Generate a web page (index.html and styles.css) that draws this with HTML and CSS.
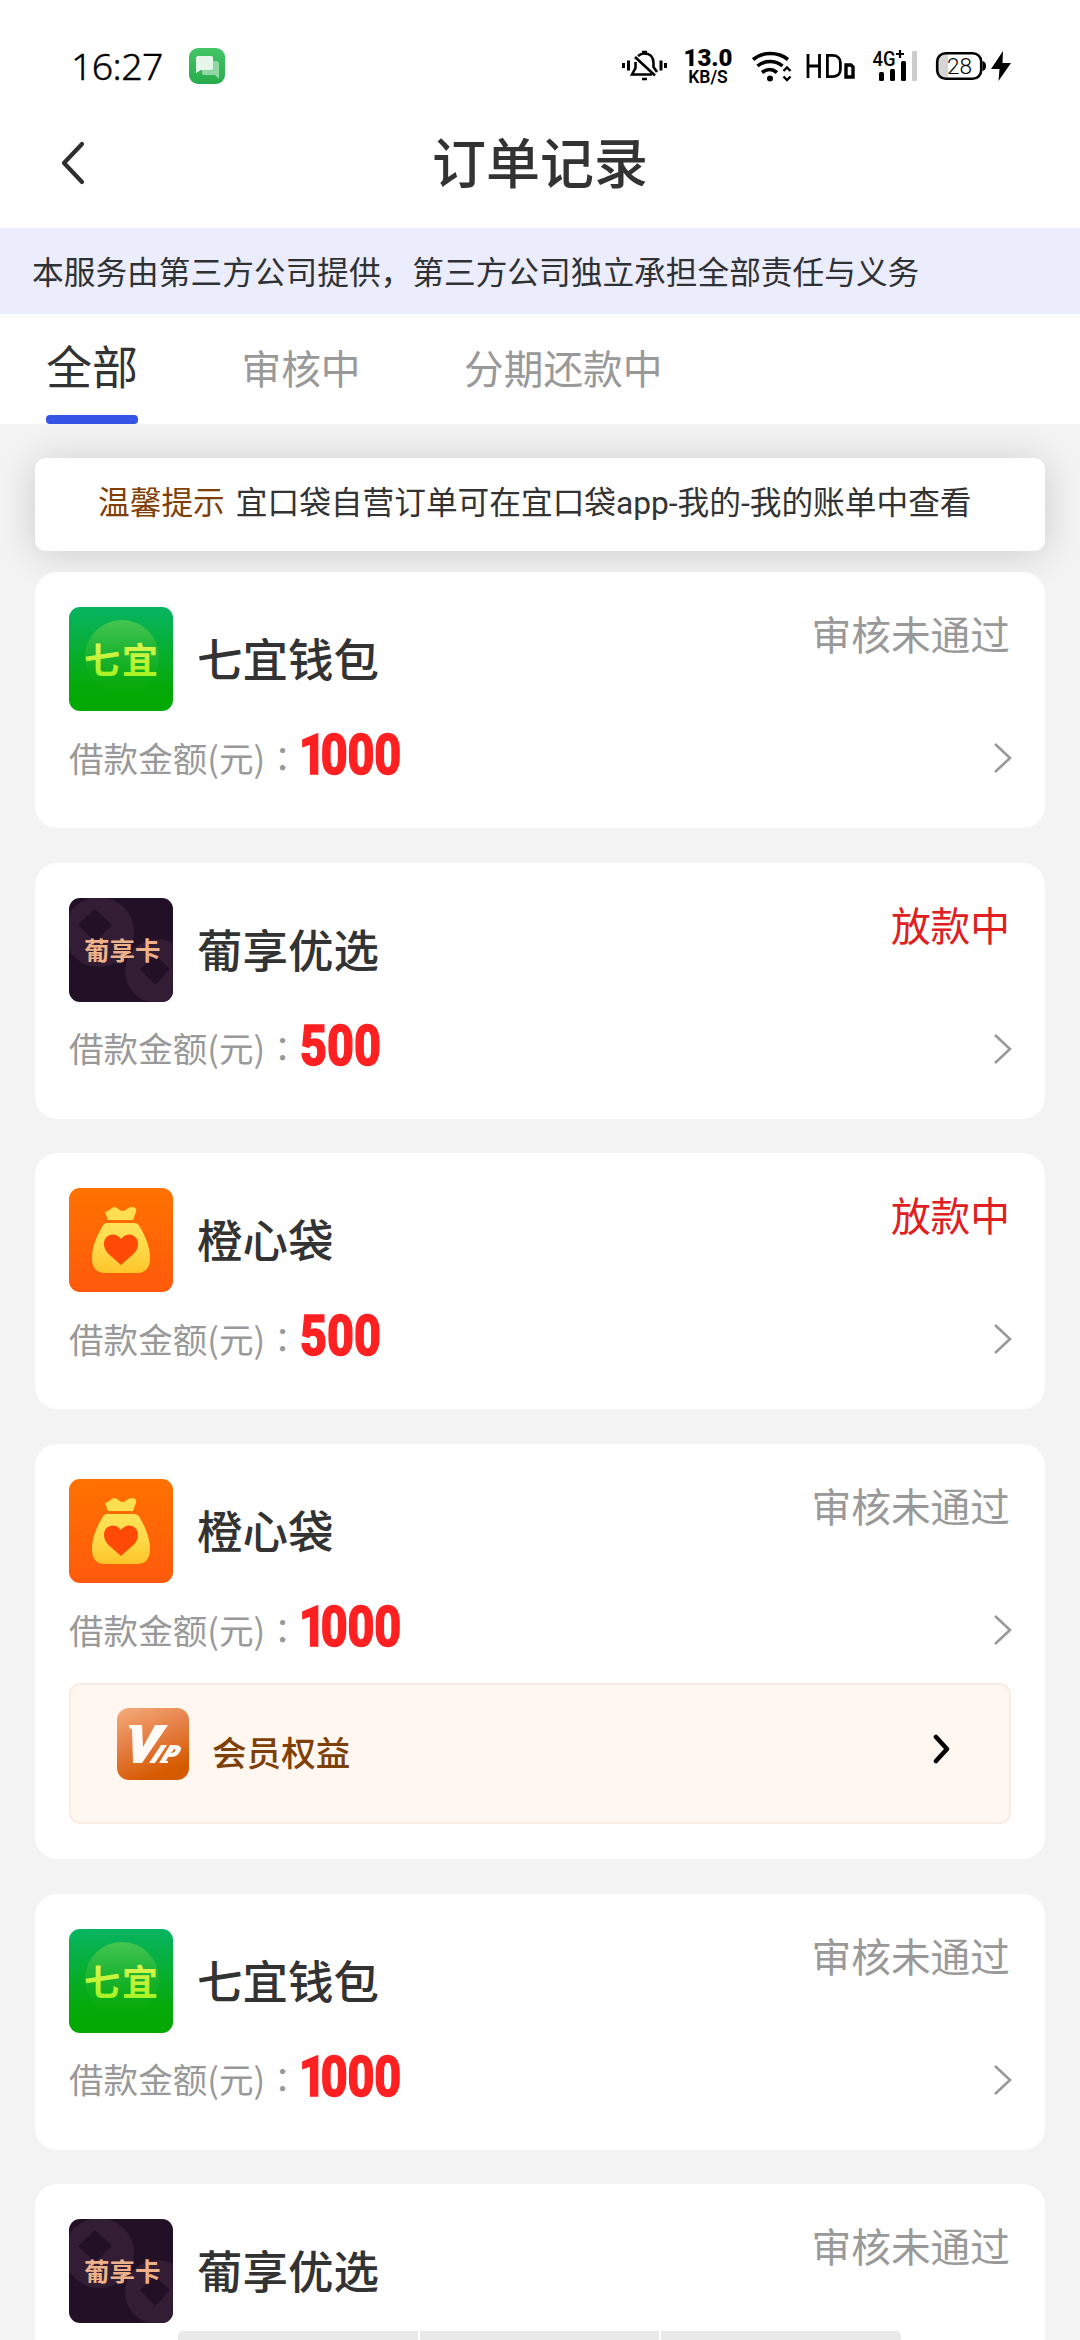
FILE: index.html
```html
<!DOCTYPE html>
<html lang="zh-CN">
<head>
<meta charset="utf-8">
<title>订单记录</title>
<link rel="stylesheet" href="styles.css">
</head>
<body>
<svg class="sprite" width="0" height="0">
  <defs>
    <linearGradient id="gGreen" x1="0" y1="0" x2="0" y2="1"><stop offset="0" stop-color="#08b462"/><stop offset=".75" stop-color="#05aa0a"/><stop offset="1" stop-color="#03a800"/></linearGradient>
    <linearGradient id="gDisc" x1="0" y1="0" x2="0" y2="1"><stop offset="0" stop-color="#4cc850" stop-opacity=".9"/><stop offset=".6" stop-color="#2cb52c" stop-opacity=".4"/><stop offset="1" stop-color="#10ac10" stop-opacity="0"/></linearGradient>
    <linearGradient id="gLime" x1="0" y1="0" x2="0" y2="1"><stop offset="0" stop-color="#f0f45c"/><stop offset="1" stop-color="#9af21a"/></linearGradient>
    <linearGradient id="gOrange" x1="0" y1="0" x2="0" y2="1"><stop offset="0" stop-color="#ff7200"/><stop offset="1" stop-color="#ff5a0c"/></linearGradient>
    <linearGradient id="gBag" x1="0" y1="0" x2="0" y2="1"><stop offset="0" stop-color="#ffe258"/><stop offset=".5" stop-color="#ffda48"/><stop offset="1" stop-color="#ffc42a"/></linearGradient>
    <linearGradient id="gVip" x1="0" y1="0" x2=".4" y2="1"><stop offset="0" stop-color="#f6ab7c"/><stop offset=".5" stop-color="#e57f45"/><stop offset="1" stop-color="#d65a00"/></linearGradient>
    <linearGradient id="gMsg" x1="0" y1="0" x2="0" y2="1"><stop offset="0" stop-color="#45c566"/><stop offset="1" stop-color="#27ac4b"/></linearGradient>
    <clipPath id="tile"><rect width="104" height="104" rx="11"/></clipPath>
  </defs>
  <symbol id="logo-qiyi" viewBox="0 0 104 104">
    <rect width="104" height="104" rx="11" fill="url(#gGreen)"/>
    <circle cx="53" cy="50" r="37" fill="url(#gDisc)"/>
  </symbol>
  <symbol id="logo-puxiang" viewBox="0 0 104 104">
    <g clip-path="url(#tile)">
      <rect width="104" height="104" fill="#221027"/>
      <circle cx="30" cy="34" r="35" fill="#331d35"/>
      <path d="M26 11l17 16-17 17L9 27z" fill="#221027"/>
      <circle cx="88" cy="73" r="32" fill="#331d35"/>
      <path d="M86 57l15 14-15 16-15-16z" fill="#221027"/>
    </g>
  </symbol>
  <symbol id="logo-bag" viewBox="0 0 104 104">
    <rect width="104" height="104" rx="11" fill="url(#gOrange)"/>
    <path d="M39 32l-3-8c4-1 6-4 9-5 4 0 5 4 9 4 4-1 5-4 9-4 4 0 5 3 4 5l-3 8z" fill="#ffdf50"/>
    <path d="M38 35h27c3 0 5 2 6 4 5 9 10 19 10 31 0 9-4 15-13 15H36c-9 0-13-6-13-15 0-12 5-22 10-31 1-2 3-4 5-4z" fill="url(#gBag)"/>
    <path d="M52 77C43 68 35 65 35 56c0-6 4-9.500 9-9.500 4 0 7 3 8 4.500 1-1.500 4-4.500 8-4.500 5 0 9 3.500 9 9.500 0 9-8 12-17 21z" fill="#ff4a05"/>
  </symbol>
  <symbol id="chev" viewBox="0 0 20 32"><path d="M2 2l15 14L2 30" fill="none" stroke="currentColor"/></symbol>
</svg>

<div class="screen">
  <header class="status-bar">
    <span class="clock">16:27</span>
    <svg class="msg" viewBox="0 0 36 36"><rect width="36" height="36" rx="9" fill="url(#gMsg)"/><path d="M13 13h14c2 0 3 1 3 2v16l-4-4H15c-1 0-2-1-2-2z" fill="#90d7a3"/><path d="M9 8h13c2 0 2 1 2 2v10c0 1-1 2-2 2H12l-5 3V10c0-1 1-2 2-2z" fill="#e6f6ea"/></svg>
    <svg class="bell" viewBox="621 48 48 36" fill="none" stroke="#000" stroke-width="2.600">
      <path d="M623.500 63v5M628.500 60.500v10M661 60.500v10M665.500 63v5" stroke-width="3"/>
      <path d="M638 56c2-1.700 4-2.500 6.300-2.500 6 0 9.200 3.800 9.200 9.500v4l3.500 5M635.500 62v6l-3.500 6.500h20M635 57l20 18.500"/>
      <path d="M642 52h5M642 79h5"/>
    </svg>
    <span class="speed"><b>13.0</b><i>KB/S</i></span>
    <svg class="wifi" viewBox="751 48 42 36" fill="none" stroke="#000" stroke-width="3.600">
      <path d="M753 59.500c10-8 25-8 35 0M757.500 66c7-6 18-6 25 0M762 72.500c5-4 10-4 15 0"/><circle cx="770" cy="78.500" r="3" fill="#000" stroke="none"/>
      <path d="M783.500 71l3.500-3.500 3.500 3.500M783.500 76.500l3.500 3.500 3.500-3.500" stroke-width="2.400"/>
    </svg>
    <svg class="hd" viewBox="806 48 50 36" fill="none" stroke="#000" stroke-width="2.800">
      <path d="M808 54v24M819.500 54v24M808 66h11.500M827.400 55.400v21.200h5c5 0 8-3 8-7v-7c0-4-3-7.200-8-7.200z"/><path d="M846 65h5l2 2v10h-7z" stroke-width="3.400"/>
    </svg>
    <svg class="cell" viewBox="872 48 46 36">
      <text x="872.500" y="65.500" font-size="20" font-weight="500" textLength="23" lengthAdjust="spacingAndGlyphs" class="sys">4G</text>
      <path d="M900 50v8M896 54h8" stroke="#000" stroke-width="2.200"/>
      <g fill="#000"><rect x="879" y="72" width="5" height="9" rx="1.500"/><rect x="890" y="69" width="5" height="12" rx="1.500"/><rect x="901" y="61" width="5" height="20" rx="1.500"/></g><rect x="912" y="51" width="5" height="30" rx="1" fill="#ccc"/>
    </svg>
    <svg class="battery" viewBox="935 48 78 36">
      <path d="M948 54h-3a8 8 0 0 0-8 8v9a8 8 0 0 0 8 8h3z" fill="#d5d5d5"/>
      <rect x="937.200" y="53.200" width="44" height="25.600" rx="8.500" fill="none" stroke="#000" stroke-width="2.600"/>
      <path d="M982.500 61c2 .5 3.500 2 3.500 5s-1.500 4.500-3.500 5z"/>
      <text x="947" y="73.500" font-size="22" font-weight="300" textLength="25" lengthAdjust="spacingAndGlyphs" class="sys">28</text>
      <path d="M1003 51l-12 18h8.500l-1 12 12.500-18h-8.500z"/>
    </svg>
  </header>

  <nav class="nav-bar">
    <svg class="back" viewBox="0 0 26 46"><path d="M22 4L4 23l18 19" fill="none" stroke="#2e2e2e" stroke-width="4.200" stroke-linecap="round" stroke-linejoin="round"/></svg>
    <h1>订单记录</h1>
  </nav>

  <p class="notice">本服务由第三方公司提供，第三方公司独立承担全部责任与义务</p>

  <div class="tabs">
    <span class="tab active">全部</span><span class="tab">审核中</span><span class="tab">分期还款中</span>
  </div>

  <main class="content">
    <p class="tip"><em>温馨提示</em>宜口袋自营订单可在宜口袋app-我的-我的账单中查看</p>

    <section class="card">
      <div class="head"><svg class="logo" viewBox="0 0 104 104"><use href="#logo-qiyi" width="104" height="104"/><text x="15" y="67" class="mark-qiyi">七宜</text></svg><h2>七宜钱包</h2><span class="state">审核未通过</span></div>
      <div class="amount"><span>借款金额(元)<span class="colon" lang="zh-TW">：</span></span><strong class="thousand">1000</strong><svg class="go"><use href="#chev"/></svg></div>
    </section>
    <section class="card">
      <div class="head"><svg class="logo" viewBox="0 0 104 104"><use href="#logo-puxiang" width="104" height="104"/><text x="15" y="62" class="mark-puxiang">葡享卡</text></svg><h2>葡享优选</h2><span class="state paying">放款中</span></div>
      <div class="amount"><span>借款金额(元)<span class="colon" lang="zh-TW">：</span></span><strong>500</strong><svg class="go"><use href="#chev"/></svg></div>
    </section>
    <section class="card">
      <div class="head"><svg class="logo"><use href="#logo-bag"/></svg><h2>橙心袋</h2><span class="state paying">放款中</span></div>
      <div class="amount"><span>借款金额(元)<span class="colon" lang="zh-TW">：</span></span><strong>500</strong><svg class="go"><use href="#chev"/></svg></div>
    </section>
    <section class="card">
      <div class="head"><svg class="logo"><use href="#logo-bag"/></svg><h2>橙心袋</h2><span class="state">审核未通过</span></div>
      <div class="amount"><span>借款金额(元)<span class="colon" lang="zh-TW">：</span></span><strong class="thousand">1000</strong><svg class="go"><use href="#chev"/></svg></div>
      <div class="vip">
        <svg class="vip-logo" viewBox="0 0 72 72"><rect width="72" height="72" rx="12" fill="url(#gVip)"/><path d="M12 17h13l1 22 12-22h13L25 55H16l-1-34-3-1z" fill="#fffaf5"/><path d="M44 37h6L38 55h-6zM53 37h5c6 0 8 4 4 8-2 3-5 4-9 4h-2l-2 4h2v2h-9zm4 4l-3 4c4 0 6-4 3-4z" fill="#fffaf5" fill-rule="evenodd"/></svg>
        <span>会员权益</span>
        <svg class="vip-go" viewBox="0 0 18 30"><path d="M3 3l11 12L3 27" fill="none" stroke="#000" stroke-width="4.500" stroke-linecap="round" stroke-linejoin="round"/></svg>
      </div>
    </section>
    <section class="card">
      <div class="head"><svg class="logo" viewBox="0 0 104 104"><use href="#logo-qiyi" width="104" height="104"/><text x="15" y="67" class="mark-qiyi">七宜</text></svg><h2>七宜钱包</h2><span class="state">审核未通过</span></div>
      <div class="amount"><span>借款金额(元)<span class="colon" lang="zh-TW">：</span></span><strong class="thousand">1000</strong><svg class="go"><use href="#chev"/></svg></div>
    </section>
    <section class="card">
      <div class="head"><svg class="logo" viewBox="0 0 104 104"><use href="#logo-puxiang" width="104" height="104"/><text x="15" y="62" class="mark-puxiang">葡享卡</text></svg><h2>葡享优选</h2><span class="state">审核未通过</span></div>
    </section>
  </main>
  <div class="sys-nav"><i></i><i></i><i></i></div>
</div>
</body>
</html>
```
FILE: styles.css
```css
* { box-sizing: border-box; margin: 0; padding: 0; }
html, body { overflow: hidden; }
body { font-family: "Noto Sans CJK SC", sans-serif; color: #303133; background: #f3f3f3; }
svg { display: block; flex: none; }
.sys { font-family: Roboto, sans-serif; }

.screen { position: relative; width: 1080px; height: 2340px; overflow: hidden; }

.status-bar { display: flex; align-items: center; height: 132px; padding-left: 71px; background: #fff; }
.clock { width: 118px; font: 300 37.500px/42px "Noto Sans", sans-serif; letter-spacing: -.6px; color: #000; -webkit-text-stroke: .4px #000; white-space: nowrap; }
.msg { width: 36px; height: 36px; }
.bell { width: 48px; height: 36px; margin-left: 396px; }
.speed { display: flex; flex-direction: column; align-items: center; width: 52px; margin: 1px 0 0 13px; font-family: Roboto, sans-serif; font-weight: 700; color: #000; }
.speed b { font-size: 24px; line-height: 20px; }
.speed i { font-size: 17.500px; line-height: 18px; font-style: normal; font-weight: 600; }
.wifi { width: 42px; height: 36px; margin-left: 17px; }
.hd { width: 50px; height: 36px; margin-left: 13px; }
.cell { width: 46px; height: 36px; margin-left: 16px; }
.battery { width: 78px; height: 36px; margin-left: 17px; }

.nav-bar { display: grid; grid-template-columns: 86px 1fr 86px; align-items: center; height: 96px; padding-bottom: 34px; background: #fff; }
.back { width: 26px; height: 46px; justify-self: end; }
.nav-bar h1 { margin-top: -4px; text-align: center; font-size: 54px; line-height: 60px; font-weight: 500; color: #333; }

.notice { height: 86px; padding-left: 32px; background: #ebedfd; font-size: 31.700px; line-height: 84px; white-space: nowrap; }

.tabs { display: flex; align-items: stretch; gap: 103.500px; height: 110px; padding-left: 46px; background: #fff; }
.tab { font-size: 39.700px; line-height: 106px; color: #999; }
.tab.active { display: flex; flex-direction: column; font-size: 46px; line-height: 101px; color: #333; }
.tab.active::after { content: ""; height: 9px; border-radius: 4px; background: #3554e5; }

.content { display: flex; flex-direction: column; gap: 34.700px; padding: 34px 35px 0; }
.tip { height: 93px; margin-bottom: -13.700px; padding-left: 63px; border-radius: 11px; background: #fff; box-shadow: 0 3px 38px rgba(0, 0, 0, .16); font-family: Roboto, "Noto Sans CJK SC", sans-serif; font-size: 31.700px; line-height: 91px; color: #333; white-space: nowrap; }
.tip em { margin-right: 11px; font-style: normal; color: #7f4008; }

.card { position: relative; min-height: 256px; padding: 35px 35px 0 34px; border-radius: 22px; background: #fff; }
.head { display: flex; height: 104px; }
.logo { width: 104px; height: 104px; }
.mark-qiyi { font-size: 36px; font-weight: 700; letter-spacing: 2px; fill: url(#gLime); }
.mark-puxiang { font-size: 25.500px; font-weight: 700; fill: #eeb28a; }
.head h2 { margin-left: 24px; font-size: 45.500px; font-weight: 500; line-height: 101px; color: #333; }
.state { margin-left: auto; font-size: 39.700px; line-height: 52px; color: #999; }
.state.paying { color: #e02020; }
.amount { display: flex; align-items: center; height: 94px; font-size: 34.600px; color: #999; }
.amount > span { margin-top: -3px; }
.colon { font-family: "Noto Sans CJK TC", sans-serif; }
.amount strong { font-family: Roboto, sans-serif; font-size: 55px; line-height: 56px; font-weight: 800; color: #ff2022; -webkit-text-stroke: 1.500px #ff2022; transform: scaleX(.85); transform-origin: left; margin-top: -6px; }
/* the leading 1 sits tighter than a tabular figure */
.amount .thousand { margin-left: -1px; letter-spacing: -.3px; }
.amount .thousand::first-letter { letter-spacing: -6px; }
.go { width: 20px; height: 32px; margin-left: auto; margin-right: -3px; stroke-width: 2.600; color: #999; }

.vip { display: flex; align-items: flex-start; width: 942px; height: 141px; margin: 6px 0 35px; padding: 23px 58px 0 46px; border: 2px solid #f8ece3; border-radius: 11px; background: #fff7f0; }
.vip-logo { width: 72px; height: 72px; }
.vip span { margin-left: 23px; font-size: 34.600px; line-height: 86px; font-weight: 500; color: #7f4008; }
.vip-go { width: 18px; height: 30px; margin: 26px 0 0 auto; }

/* system navigation handle, floats over the list */
.sys-nav { position: absolute; left: 178px; bottom: 0; width: 723px; height: 9px; display: grid; grid-template-columns: repeat(3, 1fr); gap: 2px; border-radius: 5px 5px 0 0; overflow: hidden; background: #fff; }
.sys-nav i { background: #e9e9e9; }
```
